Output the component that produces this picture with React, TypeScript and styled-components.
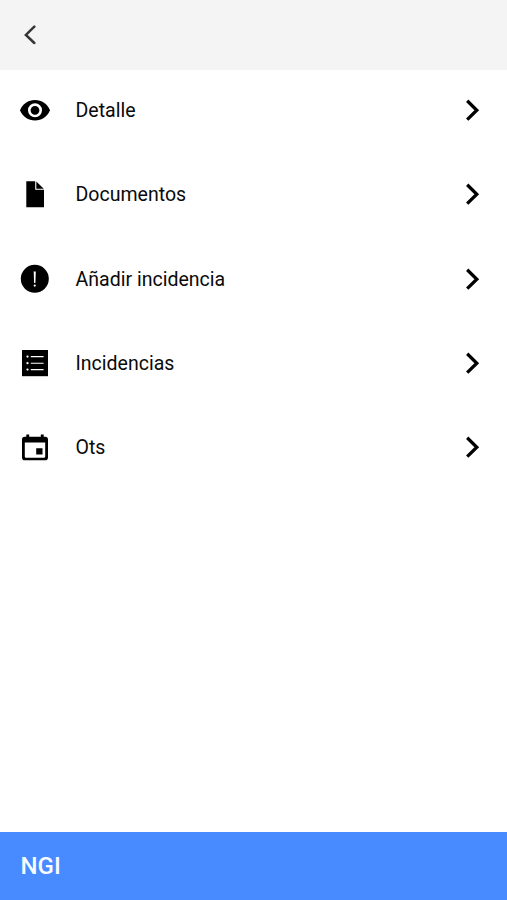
import React from "react";
import styled, { createGlobalStyle } from "styled-components";

const GlobalStyle = createGlobalStyle`
  * { box-sizing: border-box; }
  body { margin: 0; background: #fff; font-family: Roboto, sans-serif; }
`;

const Screen = styled.div`
  display: flex;
  flex-direction: column;
  height: 900px;
  background: #fff;
  color: #0a0a0a;
`;

const Header = styled.header`
  display: flex;
  align-items: center;
  flex: none;
  height: 70px;
  padding-left: 20px;
  background: #f4f4f4;
`;

const BackButton = styled.button`
  display: flex;
  padding: 0;
  border: 0;
  background: none;
`;

const Menu = styled.nav`
  display: flex;
  flex: 1;
  flex-direction: column;
  gap: 4.3px;
  padding-top: 0.2px;
`;

const MenuItem = styled.a`
  display: flex;
  align-items: center;
  height: 80px;
  padding: 0 25px 0 20px;
`;

const Label = styled.span`
  flex: 1;
  margin-left: 25.5px;
  padding-top: 2px;
  font-size: 19.55px;
  line-height: 24px;
`;

const Icon = styled.svg`
  display: block;
  flex: none;
`;

const Footer = styled.footer`
  display: flex;
  align-items: center;
  flex: none;
  height: 68px;
  padding-left: 20.5px;
  background: #488aff;
  color: #f8fbff;
  font-size: 24px;
  font-weight: 500;
`;

const items = [
  {
    label: "Detalle",
    icon: (
      <>
        <path d="M0 15.3C2.5 9 8.3 5 15 5S27.5 9 30 15.3C27.5 21.6 21.7 25.6 15 25.6S2.5 21.6 0 15.3Z" />
        <circle cx="15" cy="15.3" r="5.7" fill="none" stroke="#fff" strokeWidth="2.6" />
      </>
    ),
  },
  {
    label: "Documentos",
    icon: (
      <>
        <path d="M6.3 2.3H15.2V10.7H24V28.3H6.3Z" />
        <path d="M16.3 2.6L23.8 9.7H16.3Z" />
      </>
    ),
  },
  {
    label: "Añadir incidencia",
    icon: (
      <>
        <circle cx="14.8" cy="14.8" r="14" />
        <path d="M13.7 7.5h2.1l-.4 11.4h-1.3Z" fill="#fff" />
        <circle cx="14.75" cy="21.6" r="1.15" fill="#fff" />
      </>
    ),
  },
  {
    label: "Incidencias",
    icon: (
      <>
        <path d="M2 2H28V28.2H2Z" />
        <path d="M10.8 8.6H23.6M10.8 15.2H23.6M10.8 21.6H23.6" stroke="#fff" strokeWidth="1.1" />
        <g fill="#fff">
          <circle cx="7.5" cy="8.6" r="1.15" />
          <circle cx="7.5" cy="15.2" r="1.15" />
          <circle cx="7.5" cy="21.6" r="1.15" />
        </g>
      </>
    ),
  },
  {
    label: "Ots",
    icon: (
      <path
        transform="translate(0 .4)"
        fillRule="evenodd"
        d="M6.3 2H9.2V4.4H20.8V2H23.7V4.4H25.2Q28 4.4 28 7.2V25Q28 27.8 25.2 27.8H4.8Q2 27.8 2 25V7.2Q2 4.4 4.8 4.4H6.3ZM4.8 10.2V24.2Q4.8 25.4 6 25.4H24Q25.2 25.4 25.2 24.2V10.2ZM16.2 15.8H22.5V22H16.2Z"
      />
    ),
  },
];

export default function App() {
  return (
    <>
      <GlobalStyle />
      <Screen>
        <Header>
          <BackButton aria-label="Volver">
            <Icon width="20" height="20" viewBox="0 0 20 20">
              <path
                d="M14.3 1.7L5.9 9.9L14.3 18"
                fill="none"
                stroke="#363636"
                strokeWidth="2.5"
                strokeLinecap="round"
              />
            </Icon>
          </BackButton>
        </Header>
        <Menu>
          {items.map((item) => (
            <MenuItem key={item.label}>
              <Icon width="30" height="30" viewBox="0 0 30 30">
                {item.icon}
              </Icon>
              <Label>{item.label}</Label>
              <Icon width="20" height="24" viewBox="0 0 20 24">
                <path d="M5.2 2.8L14.8 12.2L5.2 21.6" fill="none" stroke="#000" strokeWidth="3.3" />
              </Icon>
            </MenuItem>
          ))}
        </Menu>
        <Footer>NGI</Footer>
      </Screen>
    </>
  );
}
